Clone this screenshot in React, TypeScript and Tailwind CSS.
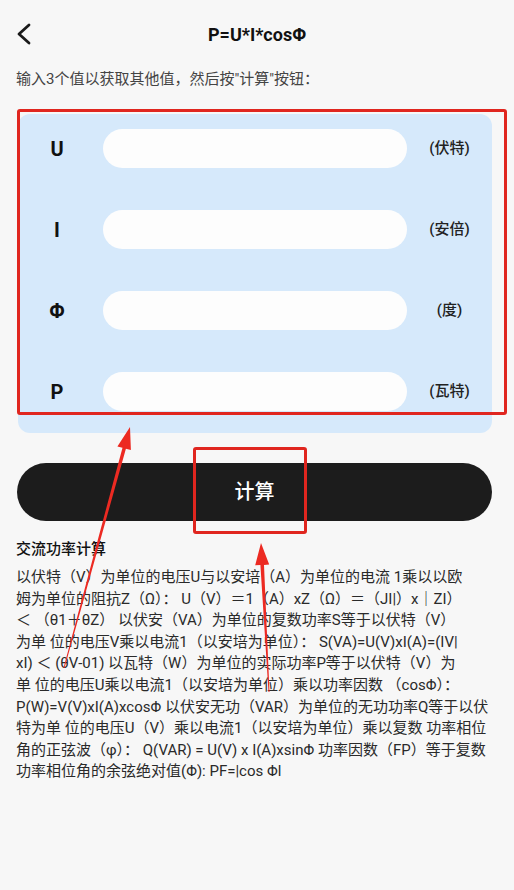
const fields = [
  { key: "U", unit: "(伏特)" },
  { key: "I", unit: "(安倍)" },
  { key: "Φ", unit: "(度)" },
  { key: "P", unit: "(瓦特)" },
];

const notes = [
  "以伏特（V）为单位的电压U与以安培（A）为单位的电流 1乘以以欧",
  "姆为单位的阻抗Z（Ω）： U（V）＝1（A）xZ（Ω）＝（JI|）x｜ZI）",
  "＜ （θ1＋θZ） 以伏安（VA）为单位的复数功率S等于以伏特（V）",
  "为单 位的电压V乘以电流1（以安培为单位）： S(VA)=U(V)xI(A)=(IV|",
  "xI) ＜ (θV-01) 以瓦特（W）为单位的实际功率P等于以伏特（V）为",
  "单 位的电压U乘以电流1（以安培为单位）乘以功率因数 （cosΦ）：",
  "P(W)=V(V)xI(A)xcosΦ 以伏安无功（VAR）为单位的无功功率Q等于以伏",
  "特为单 位的电压U（V）乘以电流1（以安培为单位）乘以复数 功率相位",
  "角的正弦波（φ）： Q(VAR) = U(V) x I(A)xsinΦ 功率因数（FP）等于复数",
  "功率相位角的余弦绝对值(Φ): PF=|cos Φl",
];

// tapered shaft + solid head, tail -> tip
const arrowPoints = (tx: number, ty: number, hx: number, hy: number) => {
  const len = Math.hypot(hx - tx, hy - ty);
  const dx = (hx - tx) / len;
  const dy = (hy - ty) / len;
  const nx = -dy;
  const ny = dx;
  const headLen = 22;
  const headW = 7;
  const bx = hx - dx * headLen;
  const by = hy - dy * headLen;
  const pts = [
    [tx + nx * 0.5, ty + ny * 0.5],
    [bx + nx * 1.8, by + ny * 1.8],
    [bx + nx * headW, by + ny * headW],
    [hx, hy],
    [bx - nx * headW, by - ny * headW],
    [bx - nx * 1.8, by - ny * 1.8],
    [tx - nx * 0.5, ty - ny * 0.5],
  ];
  return pts.map((p) => `${p[0].toFixed(1)},${p[1].toFixed(1)}`).join(" ");
};

const App = () => {
  return (
    <div
      className="relative w-[514px] min-h-[890px] bg-[#f7f7f7] text-[#222]"
      style={{ fontFamily: 'Roboto, "Noto Sans CJK SC", sans-serif' }}
    >
      {/* header */}
      <div className="flex h-[68px] items-center">
        <div className="w-[60px] pl-[16px]">
          <svg width="16" height="22" viewBox="0 0 16 22">
            <polyline
              points="13,2 3,11 13,20"
              fill="none"
              stroke="#1a1a1a"
              strokeWidth="2.8"
              strokeLinecap="round"
              strokeLinejoin="round"
            />
          </svg>
        </div>
        <div className="flex-1 text-center text-[18px] font-bold text-[#111]">P=U*I*cosΦ</div>
        <div className="w-[60px]" />
      </div>

      <p className="px-[16px] text-[15px] leading-[22px] text-[#444]">
        输入3个值以获取其他值，然后按"计算"按钮：
      </p>

      {/* inputs panel */}
      <div className="ml-[18px] mt-[24px] flex w-[474px] flex-col gap-[42px] rounded-[12px] bg-[#d6e9fb] pb-[22px] pt-[15px]">
        {fields.map((f) => (
          <div key={f.key} className="flex h-[39px] items-center">
            <div className="w-[78px] text-center text-[20px] font-bold text-[#111]">{f.key}</div>
            <input className="ml-[7px] h-[39px] w-[304px] rounded-full bg-[#fdfdfd] px-4 outline-none" />
            <div className="flex-1 text-center text-[15px] font-medium text-[#222]">{f.unit}</div>
          </div>
        ))}
      </div>

      <button className="ml-[17px] mt-[30px] flex h-[58px] w-[475px] items-center justify-center rounded-full bg-[#1c1c1c] text-[20px] font-medium text-white">
        计算
      </button>

      <div className="px-[16px] pb-[40px]">
        <h3 className="mt-[17px] text-[15px] font-medium leading-[22px] text-[#111]">交流功率计算</h3>
        <div className="mt-[7px] text-[15px] leading-[21.6px] text-[#2a2a2a]">
          {notes.map((line, i) => (
            <div key={i} className="whitespace-nowrap">
              {line}
            </div>
          ))}
        </div>
      </div>

      {/* red markup over the screen */}
      <div className="pointer-events-none absolute left-[17px] top-[109px] h-[306px] w-[490px] rounded-[3px] border-[3px] border-[#e0261f]" />
      <div className="pointer-events-none absolute left-[193px] top-[447px] h-[87px] w-[114px] rounded-[3px] border-[3px] border-[#e0261f]" />
      <svg className="pointer-events-none absolute left-0 top-0" width="514" height="890">
        <polygon points={arrowPoints(64, 668, 130, 427)} fill="#ec2a22" />
        <polygon points={arrowPoints(269, 692, 261, 543)} fill="#ec2a22" />
      </svg>
    </div>
  );
};

export default App;
